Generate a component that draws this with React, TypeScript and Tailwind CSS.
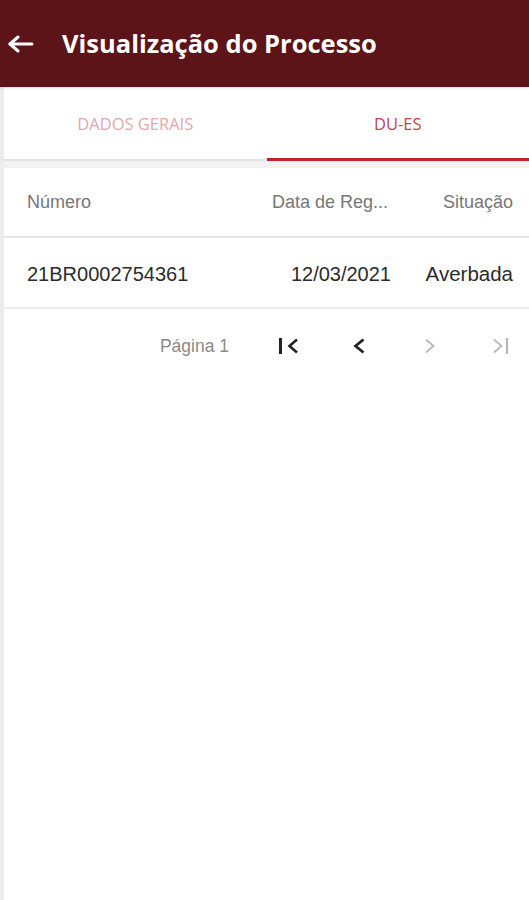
export default function App() {
  return (
    <div className="flex min-h-[900px] w-[529px] bg-[#ececec] pl-[4px]">
      <div className="flex flex-1 flex-col bg-white">
        <header className="-ml-[4px] flex h-[87px] items-center bg-[#5c1418] pl-[8px] shadow-sm">
          <svg width="26" height="20" viewBox="0 0 26 20" fill="none" stroke="#fff" strokeWidth="3" strokeLinecap="round" strokeLinejoin="round">
            <path d="M2 10h22" />
            <path d="M10 3L2 10l8 7" />
          </svg>
          <h1 className="ml-[28px] font-['Open_Sans',sans-serif] text-[25.5px] font-bold text-white">
            Visualização do Processo
          </h1>
        </header>

        <nav className="flex h-[74px] border-b-2 border-[#e3e3e3] pt-[3px] font-['Open_Sans',sans-serif] text-[16.5px]">
          <div className="flex flex-1 items-center justify-center text-[#e5a6ae]">DADOS GERAIS</div>
          <div className="-mb-[2px] flex flex-1 items-center justify-center border-b-[3px] border-[#c4222b] text-[#c0464d]">
            DU-ES
          </div>
        </nav>

        <div className="h-[7px] bg-[#f2f2f2]" />

        <div className="font-['Liberation_Sans',Arial,sans-serif]">
          <div className="flex h-[70px] items-center border-b-2 border-[#e6e6e6] pt-[1px] pr-[16px] text-[18px] text-[#777]">
            <div className="flex-1 pl-[23px]">Número</div>
            <div className="w-[140px] pr-[3px] text-right">Data de Reg...</div>
            <div className="w-[122px] text-right">Situação</div>
          </div>
          <div className="flex h-[71px] items-center border-b-2 border-[#eeeeee] pt-[3px] pr-[16px] text-[20px] text-[#2b2b2b]">
            <div className="flex-1 pl-[23px]">21BR0002754361</div>
            <div className="w-[140px] text-right">12/03/2021</div>
            <div className="w-[122px] text-right text-[20.5px]">Averbada</div>
          </div>
          <div className="flex h-[72px] items-center justify-end pt-[2px] pr-[19px]">
            <span className="text-[17.5px] text-[#8a8a8a]">Página 1</span>
            <svg className="ml-[50px]" width="20" height="24" viewBox="0 0 20 24" fill="none" stroke="#222">
              <path d="M1.5 4v16" strokeWidth="3" />
              <path d="M18 5.5L10.5 12l7.5 6.5" strokeWidth="2.6" strokeLinejoin="miter" />
            </svg>
            <svg className="ml-[53px]" width="14" height="24" viewBox="0 0 14 24" fill="none" stroke="#222">
              <path d="M11.5 5.5L3.5 12l8 6.5" strokeWidth="2.8" />
            </svg>
            <svg className="ml-[58px]" width="12" height="24" viewBox="0 0 12 24" fill="none" stroke="#b8b8b8">
              <path d="M2 5.5l7.5 6.5L2 18.5" strokeWidth="1.8" />
            </svg>
            <svg className="ml-[56px]" width="18" height="24" viewBox="0 0 18 24" fill="none" stroke="#b8b8b8">
              <path d="M2 5.5l7.5 6.5L2 18.5" strokeWidth="1.8" />
              <path d="M15 4v16" strokeWidth="2.2" />
            </svg>
          </div>
        </div>
      </div>
    </div>
  );
}
